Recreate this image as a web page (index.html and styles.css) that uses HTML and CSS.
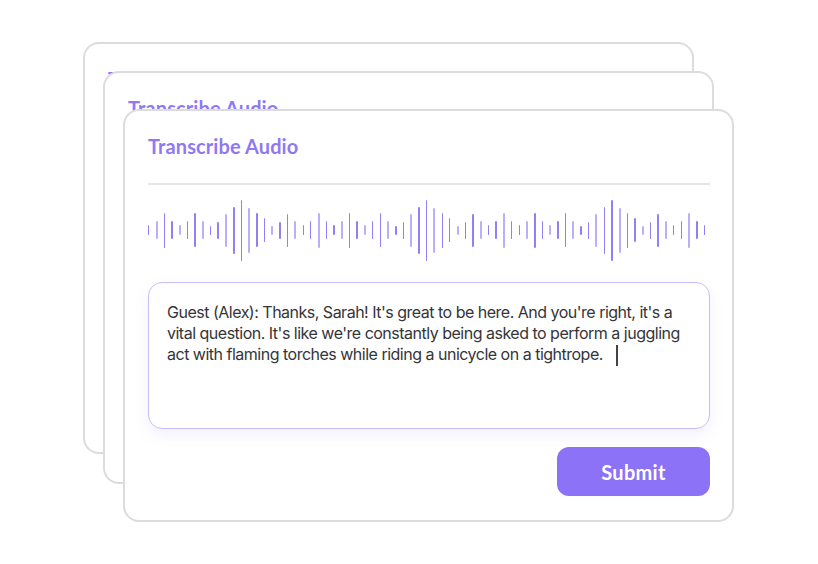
FILE: index.html
```html
<!DOCTYPE html>
<html lang="en">
<head>
<meta charset="utf-8">
<title>Transcribe Audio</title>
<link rel="stylesheet" href="styles.css">
</head>
<body>
<div class="stage">
  <div class="card card-back1"><h2 class="title">Transcribe Audio</h2></div>
  <div class="card card-back2"><h2 class="title">Transcribe Audio</h2></div>
  <div class="card card-front">
    <h2 class="title">Transcribe Audio</h2>
    <div class="divider"></div>
    <div class="wave" id="wave"></div>
    <div class="textbox">
      <p class="transcript">Guest (Alex): Thanks, Sarah! It's great to be here. And you're right, it's a vital question. It's like we're constantly being asked to perform a juggling act with flaming torches while riding a unicycle on a tightrope.<span class="caret"></span></p>
    </div>
    <div class="actions">
      <button class="submit" type="button">Submit</button>
    </div>
  </div>
</div>
<script>
(function(){
  var h=[10,18,35,18,10,18,34,18,9,17,33,47,61,45,34,24,9,17,33,18,10,18,35,18,10,18,35,18,10,18,34,18,9,17,33,47,61,45,35,24,9,17,33,18,10,18,35,18,10,18,35,18,10,18,34,18,9,17,33,47,61,45,35,24,9,17,33,18,10,18,35,18,10];
  var w=document.getElementById('wave');
  h.forEach(function(v,i){
    var b=document.createElement('span');
    b.className='bar'+(i%3===1?' soft':'');
    b.style.height=v+'px';
    w.appendChild(b);
  });
})();
</script>
</body>
</html>
```
FILE: styles.css
```css
* { box-sizing: border-box; }
html, body { margin: 0; padding: 0; background: #ffffff; }
body { width: 818px; height: 564px; overflow: hidden; font-family: "Inter", "Liberation Sans", sans-serif; }

.stage {
  display: grid;
  padding: 0;
}
.card {
  grid-area: 1 / 1;
  width: 611px;
  background: #ffffff;
  border: 2px solid #dcdcdc;
  border-radius: 16px;
  padding: 20px 23px 0 23px;
  display: flex;
  flex-direction: column;
}
.card-back1 { margin: 42px 0 0 83px; height: 412px; }
.card-back2 { margin: 71px 0 0 103px; height: 413px; }
.card-front { margin: 109px 0 0 123px; height: 413px; }

.title {
  margin: 0;
  font-family: "Lato", "Liberation Sans", sans-serif;
  font-weight: 700;
  font-size: 20px;
  line-height: 30px;
  color: #8f79f3;
  letter-spacing: 0.1px;
}
.divider {
  margin-top: 22px;
  height: 2px;
  background: #e6e6ea;
  width: 562px;
}
.wave {
  margin-top: 13px;
  height: 64px;
  width: 558px;
  display: flex;
  align-items: center;
  justify-content: space-between;
}
.bar {
  display: block;
  width: 1.4px;
  background: #937ef5;
  border-radius: 1px;
}
.bar.soft { background: #bbaff9; width: 2px; }

.textbox {
  margin-top: 20px;
  width: 562px;
  height: 147px;
  border: 1.5px solid #c8bdf6;
  border-radius: 14px;
  padding: 19px 18px 0 18px;
  box-shadow: 0 6px 14px rgba(139, 118, 242, 0.10);
}
.transcript {
  margin: 0;
  font-family: "Inter", "Liberation Sans", sans-serif;
  font-size: 16px;
  line-height: 21px;
  letter-spacing: -0.5px;
  color: #353538;
}
.caret {
  display: inline-block;
  width: 2px;
  height: 21px;
  background: #444;
  margin-left: 13px;
  vertical-align: -6px;
}
.actions {
  display: flex;
  justify-content: flex-end;
  width: 562px;
  margin-top: 18px;
}
.submit {
  width: 153px;
  height: 49px;
  border: none;
  border-radius: 12px;
  background: #8b72f6;
  color: #ffffff;
  font-family: "Lato", "Liberation Sans", sans-serif;
  font-weight: 700;
  font-size: 20px;
  letter-spacing: 0.3px;
  cursor: pointer;
}
```
